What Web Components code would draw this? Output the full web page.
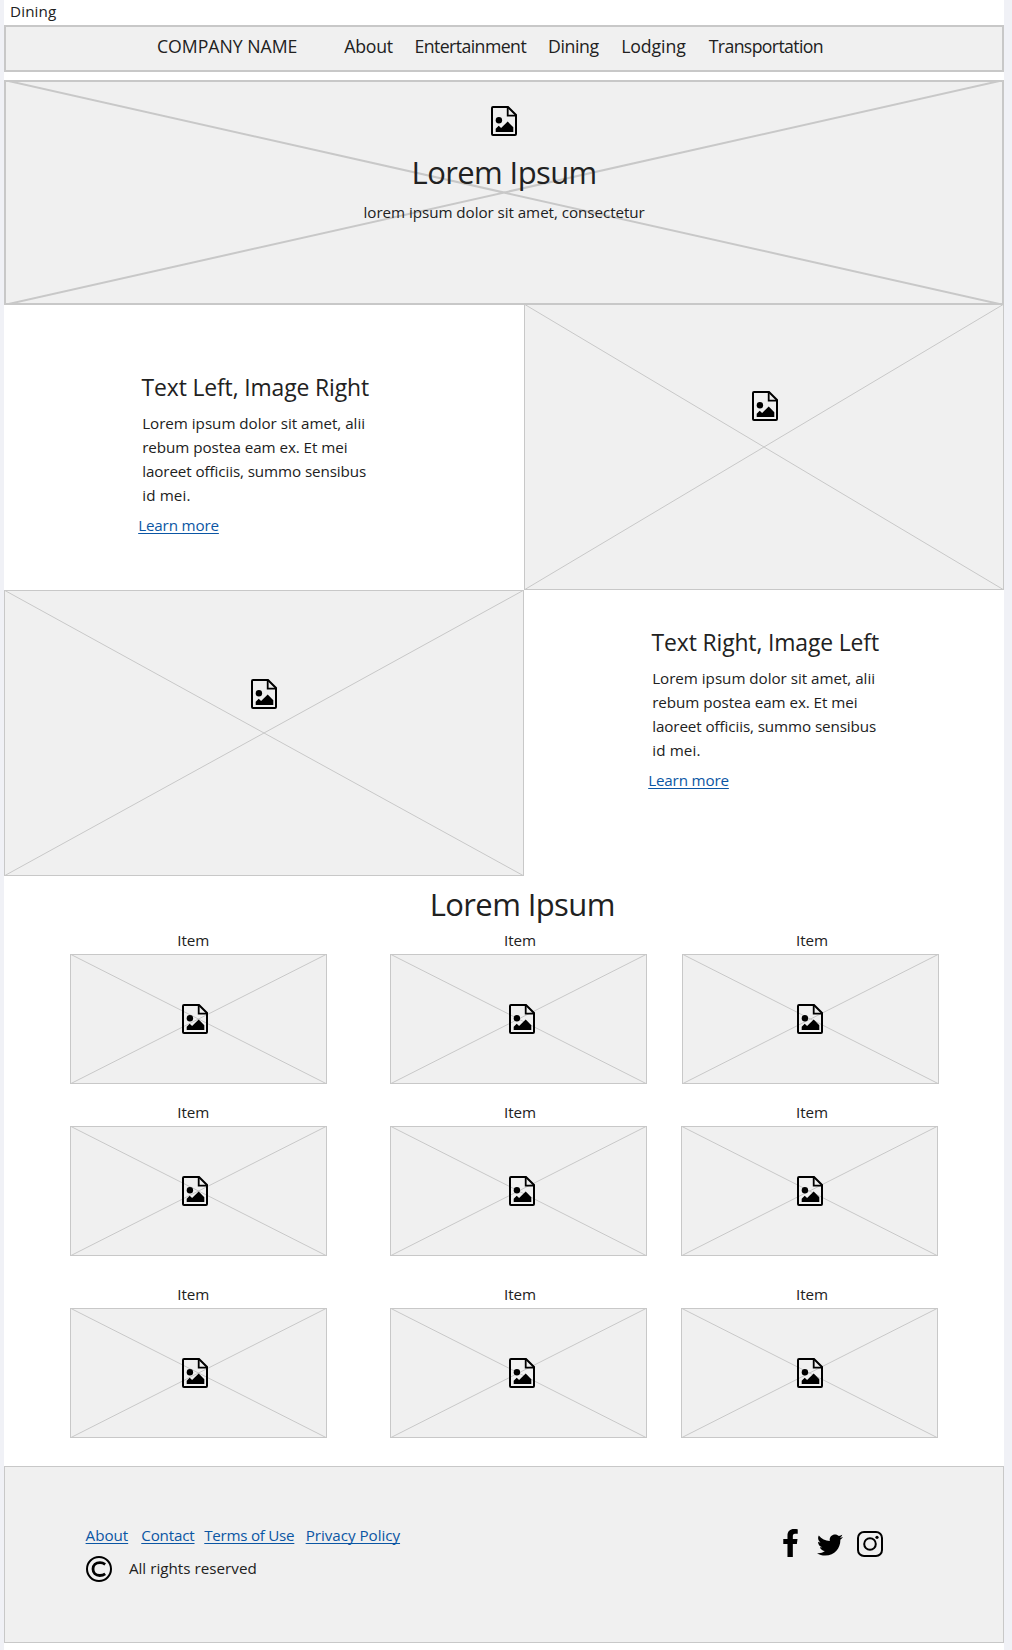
<!DOCTYPE html>
<html lang="en">
<head>
<meta charset="utf-8">
<title>Dining</title>
<style>
html{background:#f0f1f6}
body{margin:0;color:#212121;font-family:"Open Sans","Noto Sans",sans-serif}
</style>
</head>
<body>
<dining-page></dining-page>
<script>
const define = (name, html, setup) => {
  const tpl = document.createElement('template');
  tpl.innerHTML = html;
  customElements.define(name, class extends HTMLElement {
    connectedCallback() {
      if (this.shadowRoot) return;
      this.attachShadow({ mode: 'open' }).append(tpl.content.cloneNode(true));
      if (setup) setup(this, this.shadowRoot);
    }
  });
};

/* One line of text whose glyphs span exactly the given width. */
const sizes = { body: [15.2, 24], nav: [17.7, 24], title: [22.9, 32], display: [31, 40] };
const pen = document.createElement('canvas').getContext('2d');
define('fit-text', `<style>
  :host{display:block;flex:none;white-space:nowrap}
  :host([link]){color:#0b56a4}
  :host([link]) span{text-decoration:underline;text-decoration-thickness:1px;text-underline-offset:1.5px;text-decoration-skip-ink:none}
</style><span><slot></slot></span>`, el => {
  const [fs, lh] = sizes[el.getAttribute('size') || 'body'];
  const w = +el.getAttribute('width'), text = el.textContent;
  pen.font = fs + 'px "Open Sans"';
  const m = pen.measureText(text);
  const ink = m.actualBoundingBoxLeft + m.actualBoundingBoxRight;
  el.style.cssText += `;width:${w}px;font-size:${fs}px;line-height:${lh}px;height:${lh}px;` +
    `text-indent:${m.actualBoundingBoxLeft}px;letter-spacing:${(w - ink) / (text.length - 1)}px`;
});

const icons = {
  image: [26, 30, '0 0 26 30', '<path d="M2 1H17L25 9V28Q25 29 24 29H2Q1 29 1 28V2Q1 1 2 1Z" fill="none" stroke="#000" stroke-width="2"/><path d="M16.7 1V9.7H25" fill="none" stroke="#000" stroke-width="1.8"/><circle cx="7.9" cy="14.2" r="3.2"/><path d="M4.7 26V22.7L7.7 19.8L10.1 22L16.7 15.6L22.3 21.2V26Z"/>'],
  copyright: [26, 26, '0 0 26 26', '<circle cx="13" cy="13" r="12" fill="none" stroke="#000" stroke-width="2"/><path d="M19.2 8.3C17.6 7.2 16 6.6 14 6.6C9.8 6.6 7 9.1 7 13.1C7 17 9.7 19.5 13.7 19.5C15.9 19.5 17.8 18.9 19.2 17.9" fill="none" stroke="#000" stroke-width="2.8"/>'],
  facebook: [15, 28, '0 0 264 512', '<path d="M215.8 85H264V3.6C255.7 2.5 227.1 0 193.8 0 124.3 0 76.7 42.4 76.7 120.3V184H0v88h76.7v240h98V272h73.6l11.7-88h-85.3v-54.7c0-26.3 7.3-44.3 41.1-44.3z"/>'],
  twitter: [26, 22, '0 48 512 416', '<path d="M459.37 151.716c.325 4.548.325 9.097.325 13.645 0 138.72-105.583 298.558-298.558 298.558-59.452 0-114.68-17.219-161.137-47.106 8.447.974 16.568 1.299 25.34 1.299 49.055 0 94.213-16.568 130.274-44.832-46.132-.975-84.792-31.188-98.112-72.772 6.498.974 12.995 1.624 19.818 1.624 9.421 0 18.843-1.3 27.614-3.573-48.081-9.747-84.143-51.98-84.143-102.985v-1.299c13.969 7.797 30.214 12.67 47.431 13.319-28.264-18.843-46.781-51.005-46.781-87.391 0-19.492 5.197-37.36 14.294-52.954 51.655 63.675 129.3 105.258 216.365 109.807-1.624-7.797-2.599-15.918-2.599-24.04 0-57.828 46.782-104.934 104.934-104.934 30.213 0 57.502 12.67 76.67 33.137 23.715-4.548 46.456-13.32 66.599-25.34-7.798 24.366-24.366 44.833-46.132 57.827 21.117-2.273 41.584-8.122 60.426-16.243-14.292 20.791-32.161 39.308-52.628 54.253z"/>'],
  instagram: [26, 26, '0 0 26 26', '<rect x="1" y="1" width="24" height="24" rx="6" fill="none" stroke="#000" stroke-width="2"/><circle cx="13" cy="13" r="5.8" fill="none" stroke="#000" stroke-width="2"/><circle cx="20" cy="6.3" r="1.6"/>']
};
define('ui-icon', `<style>:host{display:block;flex:none}svg{display:block}</style>`, (el, root) => {
  const [w, h, box, body] = icons[el.getAttribute('name')];
  root.innerHTML += `<svg width="${w}" height="${h}" viewBox="${box}">${body}</svg>`;
});

/* Crossed box that stands for a picture; slotted content is stacked over the cross. */
define('image-box', `<style>
  :host{display:grid;box-sizing:border-box;--line:1px;background:#f0f0f0;overflow:hidden}
  :host([heavy]){--line:2px}
  svg,div,i{grid-area:1/1;min-width:0;min-height:0}
  svg{width:100%;height:100%;stroke:#c8c8c8;stroke-width:var(--line)}
  i{border:var(--line) solid #c8c8c8}
  div{display:flex;flex-direction:column;align-items:flex-start}
</style><svg viewBox="0 0 100 100" preserveAspectRatio="none"><path d="M0 0L100 100M0 100L100 0" vector-effect="non-scaling-stroke"/></svg><i></i><div><slot></slot></div>`);

define('nav-bar', `<style>
  :host{display:flex;box-sizing:border-box;height:47px;border:2px solid #c8c8c8;background:#f0f0f0;padding:7px 0 0 152px;margin-bottom:8px}
  nav{display:flex;gap:22.6px;margin-left:47.6px}
</style><fit-text size="nav" width="138.6">COMPANY NAME</fit-text>
<nav><fit-text size="nav" width="48.6">About</fit-text><fit-text size="nav" width="111">Entertainment</fit-text><fit-text size="nav" width="50.6">Dining</fit-text><fit-text size="nav" width="64">Lodging</fit-text><fit-text size="nav" width="114">Transportation</fit-text></nav>`);

define('hero-banner', `<style>
  image-box{height:225px}
  ui-icon{margin:26px 0 0 487px}
  .t{margin:16px 0 0 410.6px}.s{margin:8px 0 0 360.6px}
</style><image-box heavy><ui-icon name="image"></ui-icon><fit-text class="t" size="display" width="181">Lorem Ipsum</fit-text><fit-text class="s" width="280">lorem ipsum dolor sit amet, consectetur</fit-text></image-box>`);

define('text-block', `<style>
  :host{display:flex;flex-direction:column}
  ::slotted(*){margin-left:3px}
  .body{margin:7px 0 0 4.6px}
  .more{margin:6px 0 0 .6px}
</style><slot></slot><div class="body"><fit-text width="221">Lorem ipsum dolor sit amet, alii</fit-text><fit-text width="203.5">rebum postea eam ex. Et mei</fit-text><fit-text width="222.8">laoreet officiis, summo sensibus</fit-text><fit-text width="46.3">id mei.</fit-text></div>
<fit-text class="more" link width="79.3">Learn more</fit-text>`);

define('item-card', `<style>
  :host{display:block;width:257px}
  image-box{height:130px;margin-top:2px}
  fit-text{margin-left:var(--label)}
  ui-icon{margin:50px 0 0 var(--icon)}
</style><fit-text width="30">Item</fit-text><image-box><ui-icon name="image"></ui-icon></image-box>`);

define('item-grid', `<style>
  :host{display:block;padding-left:66px}
  .row{display:flex}
  .row + .row{margin-top:16px}
  .row:last-child{margin-top:26px}
  item-card{--label:108.3px;--icon:112px}
  item-card:nth-child(2){--label:115px;--icon:119.3px;margin-left:63px}
  item-card:nth-child(3){--label:116px;--icon:116.3px;margin-left:34px}
  .row:first-of-type item-card:nth-child(3){--label:115px;--icon:115.3px;margin-left:35px}
</style>${'<div class="row"><item-card></item-card><item-card></item-card><item-card></item-card></div>'.repeat(3)}`);

define('page-footer', `<style>
  :host{display:flex;box-sizing:border-box;height:177px;margin-top:28px;border:1px solid #c8c8c8;background:#f0f0f0}
  .legal{box-sizing:border-box;width:778.4px;padding:56px 0 0 80.6px}
  .links{display:flex}
  .links fit-text:nth-child(2){margin-left:12.5px}
  .links fit-text:nth-child(3){margin-left:9px}
  .links fit-text:nth-child(4){margin-left:12.6px}
  .rights{display:flex;margin-top:9px}
  .rights fit-text{margin-left:17.3px}
  .social{display:flex;align-items:flex-start;padding-top:62px}
  ui-icon[name=twitter]{margin:5px 14px 0 19px}
  ui-icon[name=instagram]{margin-top:2px}
</style><div class="legal"><div class="links"><fit-text link width="43.2">About</fit-text><fit-text link width="54">Contact</fit-text><fit-text link width="89.8">Terms of Use</fit-text><fit-text link width="93.8">Privacy Policy</fit-text></div>
<div class="rights"><ui-icon name="copyright"></ui-icon><fit-text width="126.6">All rights reserved</fit-text></div></div>
<div class="social"><ui-icon name="facebook"></ui-icon><ui-icon name="twitter"></ui-icon><ui-icon name="instagram"></ui-icon></div>`);

define('dining-page', `<style>
  :host{display:block;box-sizing:border-box;width:1000px;height:1650px;margin-left:4px;background:#fff}
  .crumb{height:25px;box-sizing:border-box;padding-left:7px;overflow:hidden}
  .crumb fit-text{margin-top:-1px}
  .split{display:flex}
  .first{height:285px}
  .first image-box{width:480px;height:286px;margin-top:-1px}
  .first text-block{width:385.4px;padding:67px 0 0 134.6px;box-sizing:content-box}
  .second image-box{width:520px;height:286px}
  .second text-block{padding:37px 0 0 124.6px}
  .first ui-icon{margin:87px 0 0 228px}
  .second ui-icon{margin:89px 0 0 247px}
  .heading{margin:8px 0 4px 428.7px}
</style>
<div class="crumb"><fit-text width="45">Dining</fit-text></div>
<nav-bar></nav-bar>
<hero-banner></hero-banner>
<div class="split first"><text-block><fit-text size="title" width="227.3">Text Left, Image Right</fit-text></text-block><image-box><ui-icon name="image"></ui-icon></image-box></div>
<div class="split second"><image-box><ui-icon name="image"></ui-icon></image-box><text-block><fit-text size="title" width="227.3">Text Right, Image Left</fit-text></text-block></div>
<fit-text class="heading" size="display" width="181">Lorem Ipsum</fit-text>
<item-grid></item-grid>
<page-footer></page-footer>`);
</script>
</body>
</html>
